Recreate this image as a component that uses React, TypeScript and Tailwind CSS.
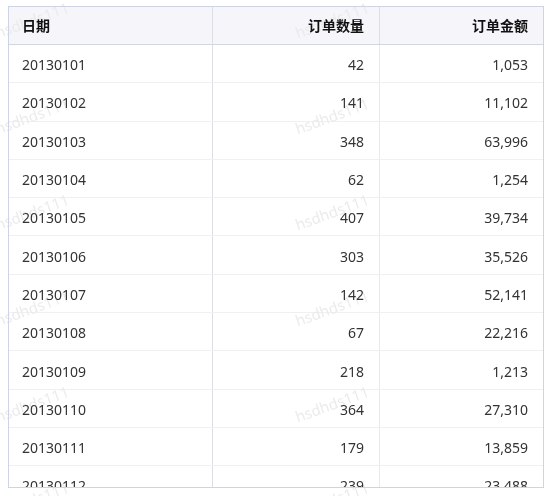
import React from "react";

const rows: [string, string, string][] = [
  ["20130101", "42", "1,053"],
  ["20130102", "141", "11,102"],
  ["20130103", "348", "63,996"],
  ["20130104", "62", "1,254"],
  ["20130105", "407", "39,734"],
  ["20130106", "303", "35,526"],
  ["20130107", "142", "52,141"],
  ["20130108", "67", "22,216"],
  ["20130109", "218", "1,213"],
  ["20130110", "364", "27,310"],
  ["20130111", "179", "13,859"],
  ["20130112", "239", "23,488"],
];

const marks: { x: number; y: number }[] = [];
for (let r = 0; r < 6; r++) {
  for (let c = 0; c < 2; c++) {
    marks.push({ x: 32 + c * 300, y: 20 + r * 96 });
  }
}

export default function App() {
  return (
    <div
      className="relative w-[550px] h-[496px] bg-white overflow-hidden"
      style={{ fontFamily: '"Noto Sans", "Noto Sans CJK SC", sans-serif' }}
    >
      <div className="ml-[8px] mt-[6px] w-[536px] h-[482px] border border-[#cdd4e5] overflow-hidden">
        <div className="grid grid-cols-[204px_167px_1fr] h-[38px] bg-[#f5f5fa] border-b border-[#d2d5e2] text-[14px] font-bold text-[#111]">
          <div className="flex items-center pl-[13px] border-r border-[#dcdee8]">日期</div>
          <div className="flex items-center justify-end pr-[15px] border-r border-[#dcdee8]">订单数量</div>
          <div className="flex items-center justify-end pr-[15px]">订单金额</div>
        </div>
        {rows.map((r) => (
          <div
            key={r[0]}
            className="grid grid-cols-[204px_167px_1fr] h-[38.3px] border-b border-[#f0f0f2] text-[14px] text-[#333]"
          >
            <div className="flex items-center pt-[2px] pl-[13px] border-r border-[#dcdde5]">{r[0]}</div>
            <div className="flex items-center justify-end pt-[2px] pr-[15px] border-r border-[#e8e9ee]">{r[1]}</div>
            <div className="flex items-center justify-end pt-[2px] pr-[15px]">{r[2]}</div>
          </div>
        ))}
      </div>
      {marks.map((m, i) => (
        <div
          key={i}
          className="pointer-events-none absolute text-[15px] text-[#ebebeb] whitespace-nowrap mix-blend-darken"
          style={{
            left: m.x,
            top: m.y,
            transform: "translate(-50%, -50%) rotate(-20deg)",
          }}
        >
          hsdhds111
        </div>
      ))}
    </div>
  );
}
